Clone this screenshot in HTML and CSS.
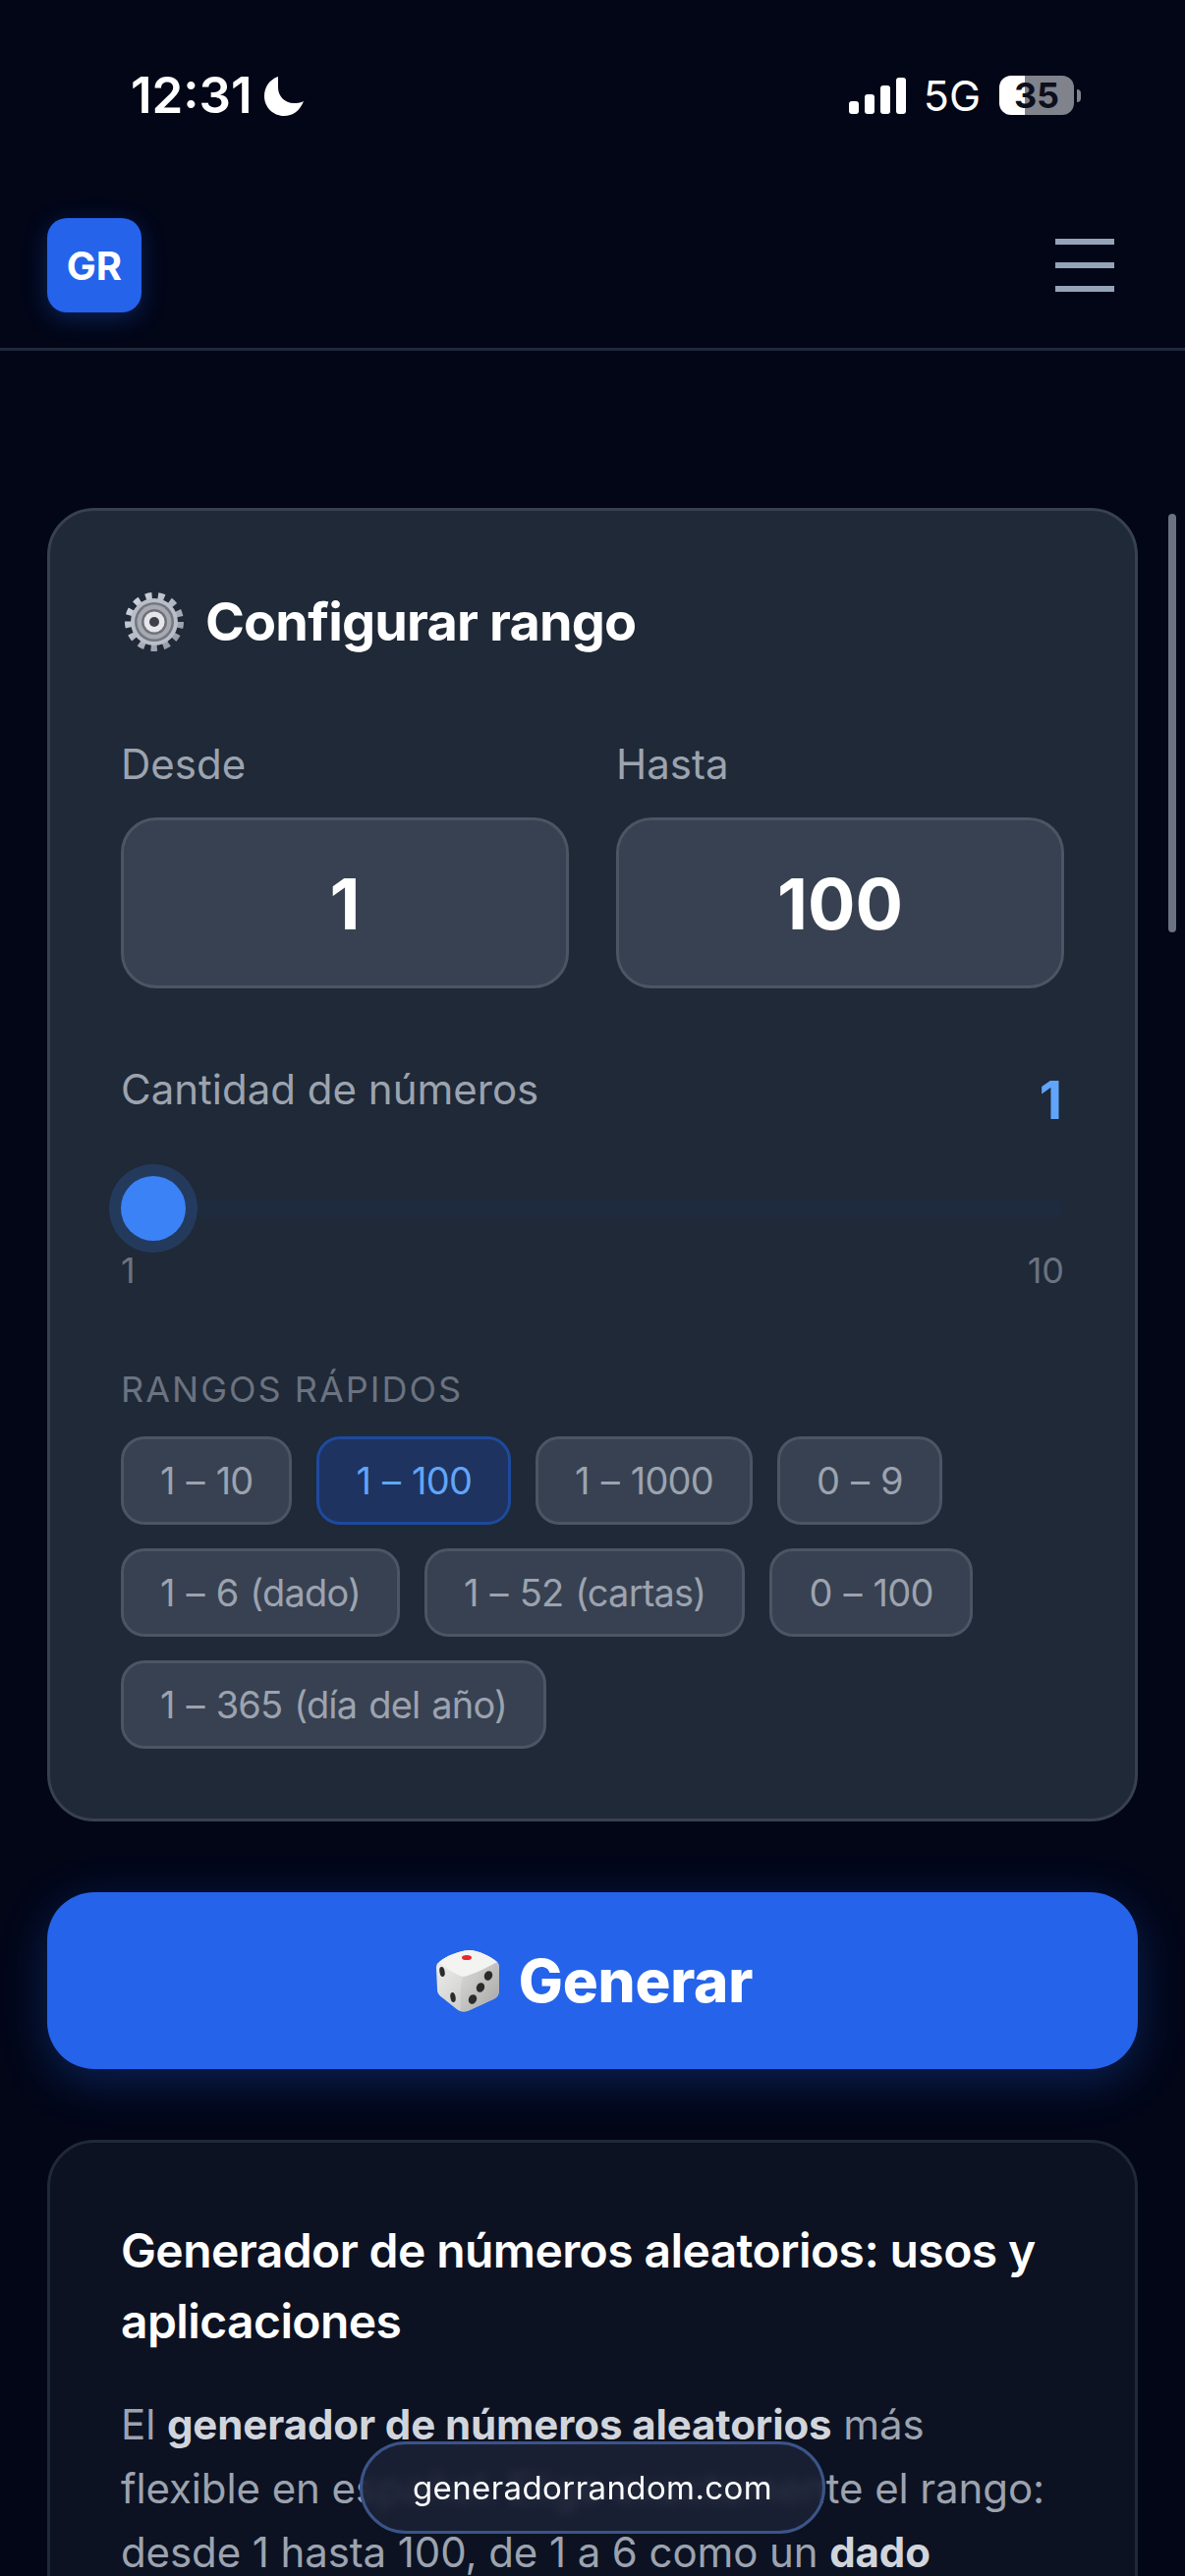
FILE: index.html
```html
<!DOCTYPE html>
<html lang="es">
<head>
    <meta charset="UTF-8">
    <meta name="viewport" content="width=device-width, initial-scale=1.0">
    <title>Generador de números aleatorios</title>
    <link rel="stylesheet" href="styles.css">
</head>
<body>

    <div class="status-bar">
        <div class="status-left">
            <span class="clock">12:31</span>
            <svg class="moon" viewBox="0 0 40 40"><path d="M14 0 C5 3 0 11 0 20 C0 31 9 40 20 40 C29 40 36 35 40 25 C36 27 33 27 30 27 C21 27 14 20 14 11 C14 7 14 3 14 0 Z" fill="#fff"/></svg>
        </div>
        <div class="status-right">
            <div class="signal">
                <span class="bar bar-1"></span>
                <span class="bar bar-2"></span>
                <span class="bar bar-3"></span>
                <span class="bar bar-4"></span>
            </div>
            <span class="network">5G</span>
            <div class="battery"><span class="battery-level">35</span></div>
            <span class="battery-tip"></span>
        </div>
    </div>

    <header class="site-header">
        <div class="logo">GR</div>
        <div class="menu-btn">
            <span></span>
            <span></span>
            <span></span>
        </div>
    </header>

    <main class="content">
        <section class="card config">
            <h2 class="card-title">
                <svg class="gear" viewBox="0 0 60 60">
                    <defs>
                        <linearGradient id="gearBody" x1="0" y1="0" x2="1" y2="1">
                            <stop offset="0" stop-color="#d3d7df"/>
                            <stop offset="1" stop-color="#8f95a3"/>
                        </linearGradient>
                    </defs>
                    <circle cx="30" cy="30" r="25.5" fill="none" stroke="url(#gearBody)" stroke-width="9" stroke-dasharray="6.16 6.16"/>
                    <circle cx="30" cy="30" r="24" fill="#b9bec9"/>
                    <circle cx="30" cy="30" r="20" fill="#73777f"/>
                    <circle cx="30" cy="30" r="17.5" fill="#a6a9b0"/>
                    <circle cx="30" cy="30" r="13" fill="#6f727a"/>
                    <circle cx="30" cy="30" r="10.5" fill="#e4e6ea"/>
                    <circle cx="30" cy="30" r="5" fill="#3d4048"/>
                </svg>
                Configurar rango
            </h2>

            <div class="range-inputs">
                <div class="field">
                    <label class="field-label">Desde</label>
                    <div class="num-box">1</div>
                </div>
                <div class="field">
                    <label class="field-label">Hasta</label>
                    <div class="num-box">100</div>
                </div>
            </div>

            <div class="qty-head">
                <span class="field-label">Cantidad de números</span>
                <span class="qty-value">1</span>
            </div>
            <div class="slider">
                <div class="slider-thumb"></div>
            </div>
            <div class="slider-ends">
                <span>1</span>
                <span>10</span>
            </div>

            <div class="presets-title">RANGOS RÁPIDOS</div>
            <div class="presets">
                <span class="chip">1 – 10</span>
                <span class="chip active">1 – 100</span>
                <span class="chip">1 – 1000</span>
                <span class="chip">0 – 9</span>
                <span class="chip">1 – 6 (dado)</span>
                <span class="chip">1 – 52 (cartas)</span>
                <span class="chip">0 – 100</span>
                <span class="chip">1 – 365 (día del año)</span>
            </div>
        </section>

        <button class="generate-btn">
            <svg class="die" viewBox="0 0 64 64">
                <defs>
                    <linearGradient id="dieLeft" x1="0" y1="0" x2="1" y2="1">
                        <stop offset="0" stop-color="#f2f2f0"/>
                        <stop offset="1" stop-color="#bdbdbb"/>
                    </linearGradient>
                    <linearGradient id="dieRight" x1="0" y1="0" x2="1" y2="1">
                        <stop offset="0" stop-color="#dcdcda"/>
                        <stop offset="1" stop-color="#a6a6a4"/>
                    </linearGradient>
                </defs>
                <path d="M3 12 C10 6 22 1 33 0 C44 0 56 7 62 12 C64 14 64 17 64 20 L64 40 C64 46 62 48 58 50 L34 61 C30 63 26 63 22 61 L7 49 C3 46 1 44 1 40 L0 18 C0 15 1 13 3 12 Z" fill="url(#dieLeft)"/>
                <path d="M27 27 C38 25 52 17 62 12 C64 14 64 17 64 20 L64 40 C64 46 62 48 58 50 L34 61 C31 62 28 63 25 62 C24 50 24 36 27 27 Z" fill="url(#dieRight)"/>
                <path d="M3 12 C10 6 22 1 33 0 C44 0 56 7 62 12 C52 17 38 25 27 27 C18 24 9 18 3 12 Z" fill="#f3f3f1"/>
                <ellipse cx="31" cy="7.5" rx="5" ry="2.6" fill="#e8272f"/>
                <ellipse cx="6" cy="22" rx="2.6" ry="5" transform="rotate(-10 6 22)" fill="#2b2b2b"/>
                <ellipse cx="17" cy="48" rx="2.6" ry="5" transform="rotate(-10 17 48)" fill="#2b2b2b"/>
                <ellipse cx="53" cy="26" rx="4" ry="5" transform="rotate(25 53 26)" fill="#2b2b2b"/>
                <ellipse cx="45" cy="38" rx="4" ry="5" transform="rotate(25 45 38)" fill="#2b2b2b"/>
                <ellipse cx="37" cy="50" rx="4" ry="5" transform="rotate(25 37 50)" fill="#2b2b2b"/>
            </svg>
            Generar
        </button>

        <section class="card article">
            <h2 class="article-title">Generador de números aleatorios: usos y aplicaciones</h2>
            <p>El <strong>generador de números aleatorios</strong> más flexible en español. Elige exactamente el rango: desde 1 hasta 100, de 1 a 6 como un <strong>dado</strong> virtual, elige exactamente cuántos números quieres generar.</p>
        </section>
    </main>

    <div class="scroll-thumb"></div>
    <div class="url-pill">generadorrandom.com</div>

</body>
</html>
```

FILE: styles.css
```css
* {
    box-sizing: border-box;
}
html, body {
    margin: 0;
    height: 2622px;
    overflow: hidden;
}
body {
    font-family: Inter, "Liberation Sans", sans-serif;
    background: #020617;
    color: #fff;
    position: relative;
}

/* status bar */
.status-bar {
    height: 198px;
    display: flex;
    justify-content: space-between;
    padding: 72px 106px 0 133px;
}
.status-left {
    display: flex;
    align-items: flex-start;
    gap: 12px;
}
.clock {
    font-size: 51px;
    font-weight: 600;
    line-height: 50px;
}
.moon {
    width: 40px;
    height: 40px;
    margin-top: 6px;
}
.status-right {
    display: flex;
    align-items: flex-start;
    padding-top: 5px;
}
.signal {
    display: flex;
    align-items: flex-end;
    gap: 6px;
    height: 37px;
    margin-top: 2px;
}
.bar {
    width: 10px;
    background: #fff;
    border-radius: 3px;
}
.bar-1 { height: 13px; }
.bar-2 { height: 20px; }
.bar-3 { height: 29px; }
.bar-4 { height: 37px; }
.network {
    font-size: 43px;
    line-height: 40px;
    font-weight: 400;
    margin: 0 19px 0 18px;
}
.battery {
    width: 76px;
    height: 40px;
    border-radius: 12px;
    background: linear-gradient(90deg, #fff 0 26px, #81838c 26px);
    text-align: center;
}
.battery-level {
    font-size: 36px;
    font-weight: 700;
    line-height: 40px;
    color: #0c0f1c;
    display: block;
}
.battery-tip {
    width: 4px;
    height: 13px;
    margin: 14px 0 0 3px;
    border-radius: 0 4px 4px 0;
    background: #81838c;
}

/* header */
.site-header {
    height: 159px;
    padding: 24px 72px 0 48px;
    display: flex;
    justify-content: space-between;
    align-items: flex-start;
    border-bottom: 3px solid #1e293b;
}
.logo {
    width: 96px;
    height: 96px;
    border-radius: 20px;
    background: #2563eb;
    box-shadow: 0 6px 24px rgba(37, 99, 235, 0.3);
    display: flex;
    align-items: center;
    justify-content: center;
    font-size: 40px;
    font-weight: 700;
}
.menu-btn {
    width: 60px;
    padding-top: 21px;
    display: flex;
    flex-direction: column;
    gap: 18px;
}
.menu-btn span {
    height: 6px;
    background: #94a3b8;
}

/* cards */
.content {
    padding: 160px 48px 0;
}
.card {
    border-radius: 48px;
    padding: 72px;
}
.config {
    background: #1f2937;
    border: 3px solid #374151;
    padding: 77px 72px 71px;
}
.card-title {
    margin: 0;
    font-size: 54px;
    line-height: 72px;
    font-weight: 700;
    letter-spacing: -0.85px;
    display: flex;
    align-items: center;
    gap: 22px;
}
.gear {
    width: 60px;
    height: 60px;
    margin-left: 4px;
}
.range-inputs {
    display: grid;
    grid-template-columns: 1fr 1fr;
    gap: 48px;
    margin-top: 84px;
}
.field-label {
    display: block;
    font-size: 42px;
    line-height: 50px;
    color: #9ca3af;
}
.num-box {
    margin-top: 29px;
    height: 174px;
    background: #374151;
    border: 3px solid #4b5563;
    border-radius: 36px;
    display: flex;
    align-items: center;
    justify-content: center;
    font-size: 72px;
    font-weight: 700;
}
.qty-head {
    display: flex;
    justify-content: space-between;
    margin-top: 78px;
}
.qty-value {
    font-size: 54px;
    line-height: 64px;
    font-weight: 700;
    color: #60a5fa;
    margin: 4px 2px 0 0;
}
.slider {
    position: relative;
    height: 20px;
    margin-top: 68px;
    border-radius: 10px;
    background: #1e2a3d;
}
.slider-thumb {
    position: absolute;
    left: 0;
    top: -23px;
    width: 66px;
    height: 66px;
    border-radius: 50%;
    background: #3b82f6;
    box-shadow: 0 0 0 12px rgba(59, 130, 246, 0.2);
}
.slider-ends {
    display: flex;
    justify-content: space-between;
    margin-top: 31px;
    font-size: 36px;
    line-height: 44px;
    color: #6b7280;
}
.presets-title {
    margin-top: 77px;
    font-size: 36px;
    line-height: 44px;
    font-weight: 400;
    letter-spacing: 2px;
    color: #6b7280;
}
.presets {
    display: flex;
    flex-wrap: wrap;
    gap: 24px 25px;
    margin-top: 26px;
}
.chip {
    height: 90px;
    padding: 0 37px;
    display: flex;
    align-items: center;
    font-size: 38px;
    font-weight: 400;
    letter-spacing: -0.8px;
    word-spacing: 2px;
    color: #9ca3af;
    background: #374151;
    border: 3px solid #4b5563;
    border-radius: 24px;
}
.chip.active {
    background: #1e335f;
    border-color: #1e4a9e;
    color: #60a5fa;
}

/* generate */
.generate-btn {
    width: 100%;
    height: 180px;
    margin-top: 72px;
    padding: 0 0 0 4px;
    border: none;
    border-radius: 48px;
    background: #2563eb;
    box-shadow: 0 12px 48px rgba(37, 99, 235, 0.3);
    color: #fff;
    font-family: inherit;
    font-size: 60px;
    font-weight: 800;
    letter-spacing: -0.2px;
    display: flex;
    align-items: center;
    justify-content: center;
    gap: 20px;
}
.die {
    width: 64px;
    height: 64px;
    margin-top: 2px;
}

/* article */
.article {
    margin-top: 72px;
    background: #0c1222;
    border: 3px solid #1f2937;
    padding: 74px 72px;
}
.article-title {
    margin: 0 0 36px;
    font-size: 48px;
    line-height: 72px;
    font-weight: 600;
    letter-spacing: -0.6px;
}
.article p {
    margin: 0;
    font-size: 42px;
    line-height: 65px;
    letter-spacing: -0.1px;
    color: #9ca3af;
}
.article strong {
    color: #d1d5db;
    font-weight: 700;
}

/* overlays */
.scroll-thumb {
    position: absolute;
    left: 1189px;
    top: 523px;
    width: 8px;
    height: 426px;
    border-radius: 4px;
    background: #6b7280;
}
.url-pill {
    position: absolute;
    left: 366px;
    top: 2485px;
    width: 474px;
    height: 94px;
    border-radius: 47px;
    display: flex;
    align-items: center;
    justify-content: center;
    font-size: 33px;
    font-weight: 400;
    letter-spacing: 0.4px;
    color: #fff;
    background: rgba(28, 33, 54, 0.87);
    border: 3px solid #3b5488;
    backdrop-filter: blur(5px);
}
```
